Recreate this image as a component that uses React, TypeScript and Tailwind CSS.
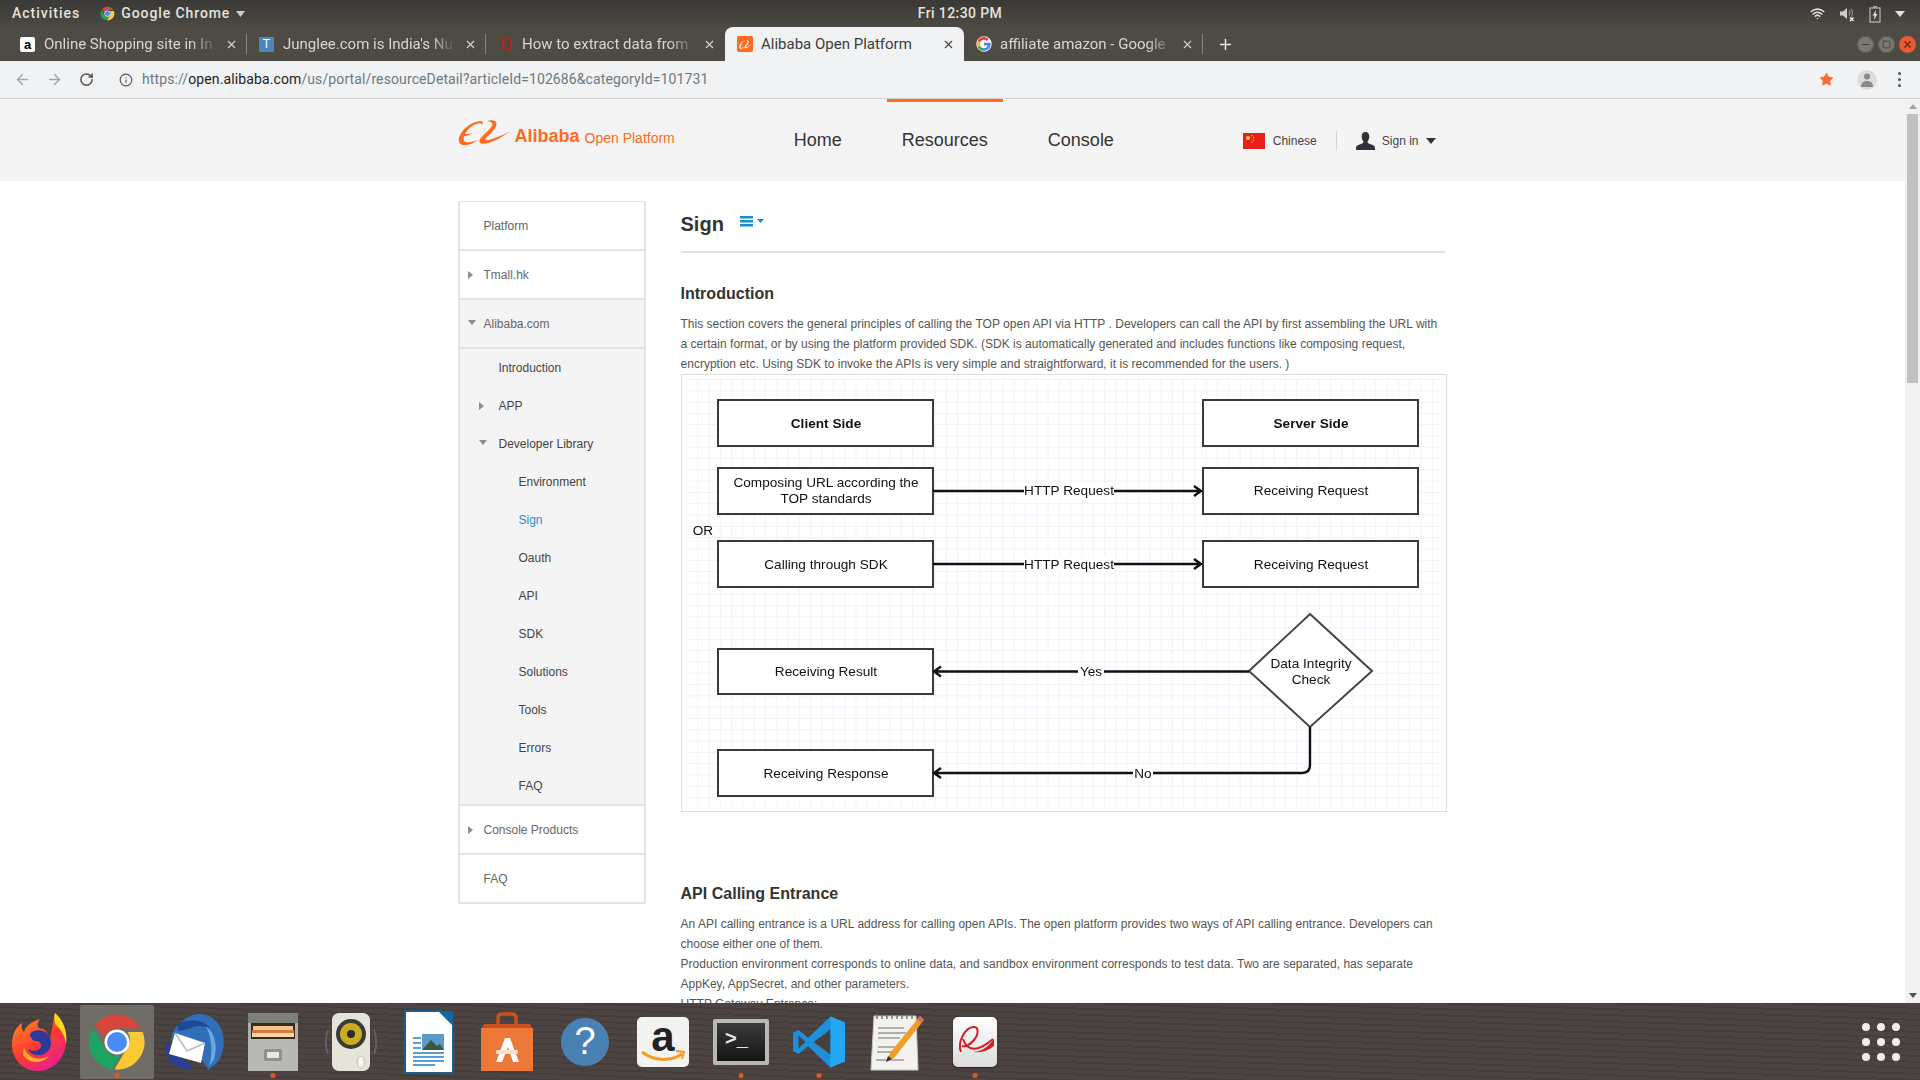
import React from 'react';
import { ArrowLeft, ArrowRight, RotateCw, Info, Plus, X, Minus, Square, Star, Wifi } from 'lucide-react';

const uiFont = "font-['Roboto','Noto_Sans',sans-serif]";
const pageFont = "font-['Liberation_Sans',Arial,sans-serif]";

const ChromeIcon = ({ size = 16 }: { size?: number }) => (
  <svg width={size} height={size} viewBox="0 0 48 48">
    <path d="M24 2a22 22 0 0 1 19.05 11H24a11 11 0 0 0-10.4 7.4L6.9 10A22 22 0 0 1 24 2z" fill="#d9453a" />
    <path d="M4.9 13l9.6 16.6A11 11 0 0 0 26.5 34.7L20 46A22 22 0 0 1 4.9 13z" fill="#1da462" />
    <path d="M44.5 16A22 22 0 0 1 22 46l9.6-16.6A11 11 0 0 0 32.5 16z" fill="#fcc934" />
    <circle cx="24" cy="24" r="10" fill="#fff" />
    <circle cx="24" cy="24" r="8" fill="#4c8bf5" />
  </svg>
);

const GoogleIcon = () => (
  <svg width="16" height="16" viewBox="0 0 48 48">
    <circle cx="24" cy="24" r="23" fill="#fff" />
    <path d="M43.6 20.5H24v7.9h11.3C34 33.5 29.600 36.500 24 36.500v8c10.800 0 20-7.800 20-20.500 0-1.200-.1-2.400-.4-3.500z" fill="#4285f4" />
    <path d="M11.700 28.300A12.800 12.800 0 0 1 11.700 19.700L5 14.500a22 22 0 0 0 0 19z" fill="#fbbc05" />
    <path d="M24 11.500c3.200 0 6 1.100 8.200 3.200l6-6A20.500 20.500 0 0 0 5 14.500l6.700 5.200C13.300 15 18.200 11.500 24 11.500z" fill="#ea4335" />
    <path d="M24 36.500c-5.800 0-10.700-3.500-12.300-8.200L5 33.500a20.500 20.500 0 0 0 19 11z" fill="#34a853" />
  </svg>
);

const AlibabaMark = ({ w = 16, h = 16, fill = '#ff6a1f' }: { w?: number; h?: number; fill?: string }) => (
  <svg width={w} height={h} viewBox="0 0 52 28" preserveAspectRatio="none">
    <path d="M24 2C15 2 5 9 1.500 18c-2 5.500 0 9 5 9 5 0 10-2.500 14-5.500-4 1.500-8.500 3-12 2.500-3-.5-3.500-3-2.500-6 2-.5 7-2 9-3.500-2.500.5-6 1.200-8 1.200C10 10 16 5 21 4.500c2-.2 3 .5 3.500 1.500.5-2-.2-4-.5-4z" fill={fill} />
    <path d="M29 2c5-1.500 9-.5 9.500 2.500.5 3.500-4 9.500-10 14.500-2 2-1.500 3.500 1 3 5-1 13-4 22.500-9-8 6-17 11-24 12.500-5 1-8.500-1-5.500-5.500 4-5 11-10 12-14 .5-2-2-3.500-5.500-4z" fill={fill} />
  </svg>
);

const Tab = ({ icon, title, active, sep }: { icon: React.ReactNode; title: string; active?: boolean; sep?: boolean }) => (
  <div className={`relative flex h-[34px] w-[239px] shrink-0 items-center pl-3 pr-[9px] ${active ? 'rounded-t-lg bg-[#f1f2f4] text-[#3c3c3c]' : 'text-[#d8d6d0]'}`}>
    <span className="flex w-6 shrink-0 items-center">{icon}</span>
    <span className={`flex-1 overflow-hidden whitespace-nowrap text-[15px] ${active ? '' : '[mask-image:linear-gradient(to_right,black_85%,transparent)]'}`}>{title}</span>
    <X size={13} strokeWidth={2} className={`ml-2 shrink-0 ${active ? 'text-[#444]' : 'text-[#d8d6d0]'}`} />
    {sep && <span className="absolute right-0 top-[7px] h-[20px] w-px bg-[#88857e]" />}
  </div>
);

const TopBar = () => (
  <div className={`relative flex h-[27px] shrink-0 items-center bg-gradient-to-b from-[#3a3935] to-[#4b4942] px-3 text-[14px] font-medium text-[#e4e2dc] ${uiFont}`}>
    <span className="tracking-[1px]">Activities</span>
    <span className="ml-5 flex items-center gap-[6px] tracking-[0.9px]">
      <ChromeIcon size={15} />
      Google Chrome
      <svg width="9" height="6" viewBox="0 0 9 6"><path d="M0 0h9L4.500 6z" fill="#cfcdc7" /></svg>
    </span>
    <span className="absolute left-1/2 -translate-x-1/2 tracking-[0.4px]">Fri 12:30 PM</span>
    <div className="ml-auto flex items-center gap-[14px] pr-[3px]">
      <Wifi size={15} strokeWidth={2.6} className="text-[#dedcd6]" />
      <svg width="16" height="16" viewBox="0 0 16 16" fill="none">
        <path d="M1 5.500h3L8 2v11L4 9.500H1z" fill="#cfcdc7" />
        <path d="M10 4.500c1 1 1 4 0 5M12 3c2 2 2 6 0 8" stroke="#8f8d87" strokeWidth="1.200" />
        <path d="M11 11.500l3.500 3.500M14.500 11.500L11 15" stroke="#eee" strokeWidth="1.600" />
      </svg>
      <svg width="12" height="18" viewBox="0 0 12 18" fill="none">
        <rect x="1" y="3" width="10" height="14" stroke="#a9a7a1" strokeWidth="1.400" />
        <rect x="4" y="1" width="4" height="2" fill="#a9a7a1" />
        <path d="M7 5L3.500 10.500h2L5 15l3.500-6h-2z" fill="#e4e2dc" />
      </svg>
      <svg width="10" height="6" viewBox="0 0 10 6"><path d="M0 0h10L5 6z" fill="#e4e2dc" /></svg>
    </div>
  </div>
);

const TabStrip = () => (
  <div className={`flex h-[34px] shrink-0 items-center bg-[#4d4b44] pl-2 ${uiFont}`}>
    <Tab
      sep
      title="Online Shopping site in In"
      icon={<span className={`flex h-[15px] w-[15px] items-center justify-center rounded-[2px] bg-white text-[13px] font-bold leading-none text-black ${pageFont}`}>a</span>}
    />
    <Tab
      sep
      title="Junglee.com is India's Nu"
      icon={<span className={`flex h-[15px] w-[15px] items-center justify-center bg-[#4a86bd] text-[12px] leading-none text-white ${pageFont}`}>T</span>}
    />
    <Tab
      title="How to extract data from"
      icon={<span className="ml-[2px] text-[18px] font-bold leading-none text-[#a8281f]">Q</span>}
    />
    <Tab
      active
      title="Alibaba Open Platform"
      icon={
        <span className="flex h-4 w-4 items-center justify-center rounded-[2px] bg-[#ff6a1f]">
          <AlibabaMark w={13} h={9} fill="#fff" />
        </span>
      }
    />
    <Tab sep title="affiliate amazon - Google" icon={<GoogleIcon />} />
    <Plus size={17} strokeWidth={2} className="ml-[14px] text-[#eeece6]" />
    <div className="ml-auto flex items-center gap-[4px] pr-[4px]">
      <span className="flex h-[17px] w-[17px] items-center justify-center rounded-full bg-[#7a7873] shadow-[inset_0_0_0_1px_#5d5b56]">
        <Minus size={11} className="text-[#3d3b37]" />
      </span>
      <span className="flex h-[17px] w-[17px] items-center justify-center rounded-full bg-[#7a7873] shadow-[inset_0_0_0_1px_#5d5b56]">
        <Square size={9} className="text-[#3d3b37]" />
      </span>
      <span className="flex h-[17px] w-[17px] items-center justify-center rounded-full bg-[#e95a30]">
        <X size={11} strokeWidth={2.4} className="text-[#5a2514]" />
      </span>
    </div>
  </div>
);

const Toolbar = () => (
  <div className={`flex h-[38px] shrink-0 items-center border-b border-[#d2d2d2] bg-[#f1f2f4] pl-[14px] ${uiFont}`}>
    <ArrowLeft size={17} strokeWidth={2} className="text-[#a4a6a9]" />
    <ArrowRight size={17} strokeWidth={2} className="ml-[15px] text-[#a4a6a9]" />
    <RotateCw size={15} strokeWidth={2.4} className="ml-[16px] text-[#555]" />
    <Info size={14} strokeWidth={2} className="ml-[25px] text-[#555]" />
    <span className="ml-[9px] text-[14px] tracking-[0.11px] text-[#6c7a7e]">
      https://<span className="text-[#1d1d1d]">open.alibaba.com</span>/us/portal/resourceDetail?articleId=102686&amp;categoryId=101731
    </span>
    <div className="ml-auto flex items-center">
      <Star size={15} fill="#fb6a3a" strokeWidth={1} className="text-[#fb6a3a]" />
      <span className="ml-[23px] flex h-[20px] w-[20px] items-center justify-center rounded-full bg-[#dcdcdc]">
        <svg width="12" height="14" viewBox="0 0 12 14"><circle cx="6" cy="3.500" r="3" fill="#8a8a8a" /><path d="M0 14c0-4 2-6 6-6s6 2 6 6z" fill="#8a8a8a" /></svg>
      </span>
      <span className="ml-[21px] mr-[19px] flex flex-col gap-[3px]">
        <span className="h-[3px] w-[3px] rounded-full bg-[#555]" />
        <span className="h-[3px] w-[3px] rounded-full bg-[#555]" />
        <span className="h-[3px] w-[3px] rounded-full bg-[#555]" />
      </span>
    </div>
  </div>
);

const SiteHeader = () => (
  <div className="h-[82px] shrink-0 bg-[#f4f4f4]">
    <div className="mx-auto flex h-full w-[990px] items-start">
      <div className="mt-[20px] flex h-[28px] items-start">
        <AlibabaMark w={52} h={27} />
        <span className="ml-[5px] mt-[3px] text-[18px] font-bold leading-[28px] text-[#ff6a1f]">Alibaba</span>
        <span className="ml-[5px] mt-[5px] text-[14px] leading-[28px] text-[#ff6a1f]">Open Platform</span>
      </div>
      <nav className="ml-[104px] flex text-[18px] text-[#333]">
        <span className="px-[15px] pt-[28px]">Home</span>
        <span className="ml-[30px] border-t-[3px] border-[#ff6a1f] px-[15px] pt-[25px]">Resources</span>
        <span className="ml-[30px] px-[15px] pt-[28px]">Console</span>
      </nav>
      <div className="ml-auto mt-[32px] flex items-center pr-[12px] text-[12px] text-[#444]">
        <svg width="22" height="16" viewBox="0 0 22 16">
          <rect width="22" height="16" fill="#e5211a" />
          <circle cx="5" cy="5" r="2" fill="#ffd21f" />
          <circle cx="9" cy="2.500" r=".7" fill="#ffd21f" />
          <circle cx="10.500" cy="4.500" r=".7" fill="#ffd21f" />
          <circle cx="10.500" cy="7" r=".7" fill="#ffd21f" />
          <circle cx="9" cy="9" r=".7" fill="#ffd21f" />
        </svg>
        <span className="ml-[8px]">Chinese</span>
        <span className="mx-[19px] h-[20px] w-px bg-[#d2d2d2]" />
        <svg width="19" height="18" viewBox="0 0 19 18">
          <path d="M9.500 0c2.600 0 3.800 2 3.800 4.500 0 2-.8 3.800-1.800 5 0 1.300.7 1.700 2.500 2.500 3 1 5 1.800 5 4V18H0v-2c0-2.200 2-3 5-4 1.800-.8 2.500-1.200 2.500-2.500-1-1.200-1.800-3-1.800-5C5.700 2 6.900 0 9.500 0z" fill="#2f3338" />
        </svg>
        <span className="ml-[7px]">Sign in</span>
        <svg className="ml-[7px]" width="10" height="6" viewBox="0 0 10 6"><path d="M0 0h10L5 6z" fill="#333" /></svg>
      </div>
    </div>
  </div>
);

const Caret = ({ open }: { open?: boolean }) =>
  open ? (
    <svg className="absolute -mt-[3px]" width="8" height="5" viewBox="0 0 8 5"><path d="M0 0h8L4 5z" fill="#8c8c8c" /></svg>
  ) : (
    <svg className="absolute" width="5" height="8" viewBox="0 0 5 8"><path d="M0 0l5 4-5 4z" fill="#8c8c8c" /></svg>
  );

const TopRow = ({ label, caret, open }: { label: string; caret?: boolean; open?: boolean }) => (
  <div className={`relative flex h-[49px] items-center border-b-2 border-[#e3e3e3] pl-[24px] ${open ? 'bg-[#f4f4f4]' : ''}`}>
    {caret && <span className="absolute left-[8px] flex h-full items-center"><Caret open={open} /></span>}
    {label}
  </div>
);

const SubRow = ({ label, indent, caret, open, active }: { label: string; indent: string; caret?: boolean; open?: boolean; active?: boolean }) => (
  <div className={`relative flex h-[38px] items-center ${indent} ${active ? 'text-[#1b8fdc]' : 'text-[#444]'}`}>
    {caret && <span className="absolute left-[19px] flex h-full items-center"><Caret open={open} /></span>}
    {label}
  </div>
);

const Sidebar = () => (
  <aside className="w-[188px] shrink-0 self-start border-x-2 border-t border-[#e3e3e3] text-[12px] text-[#666]">
    <TopRow label="Platform" />
    <TopRow label="Tmall.hk" caret />
    <TopRow label="Alibaba.com" caret open />
    <div className="h-[457px] border-b-2 border-[#e3e3e3] bg-[#f4f4f4]">
      <SubRow label="Introduction" indent="pl-[39px]" />
      <SubRow label="APP" indent="pl-[39px]" caret />
      <SubRow label="Developer Library" indent="pl-[39px]" caret open />
      {['Environment', 'Sign', 'Oauth', 'API', 'SDK', 'Solutions', 'Tools', 'Errors', 'FAQ'].map((s) => (
        <SubRow key={s} label={s} indent="pl-[59px]" active={s === 'Sign'} />
      ))}
    </div>
    <TopRow label="Console Products" caret />
    <TopRow label="FAQ" />
  </aside>
);

const Box = ({ x, y, w, h }: { x: number; y: number; w: number; h: number }) => (
  <rect x={x} y={y} width={w} height={h} fill="#fff" stroke="#3a3a3a" strokeWidth="2" />
);

const Flow = () => (
  <svg className="block blur-[0.4px]" width="764" height="436" viewBox="682 375 764 436" fontFamily="Liberation Sans, Arial, sans-serif" fontSize="13.6" fill="#111">
    <defs>
      <pattern id="minor" x="686" y="379" width="11.300" height="11.300" patternUnits="userSpaceOnUse">
        <path d="M0 0V11.300M0 0H11.300" stroke="#f2f1fd" strokeWidth="1.800" fill="none" />
      </pattern>
    </defs>
    <rect x="686" y="379" width="755" height="428" fill="url(#minor)" />
    <Box x={718} y={400} w={215} h={46} />
    <Box x={1203} y={400} w={215} h={46} />
    <Box x={718} y={468} w={215} h={46} />
    <Box x={1203} y={468} w={215} h={46} />
    <Box x={718} y={541} w={215} h={46} />
    <Box x={1203} y={541} w={215} h={46} />
    <Box x={718} y={649} w={215} h={45} />
    <Box x={718} y={750} w={215} h={46} />
    <path d="M1310 614L1372 671L1310 727L1249 671Z" fill="#fff" stroke="#444" strokeWidth="2" />
    <g stroke="#111" strokeWidth="2.400" fill="none">
      <path d="M933 491H1200M1194 486L1201 491L1194 496" />
      <path d="M933 564H1200M1194 559L1201 564L1194 569" />
      <path d="M1249 671.500H935M941 666.500L934 671.500L941 676.500" />
      <path d="M1310 727V765Q1310 773 1302 773H935M941 768L934 773L941 778" />
    </g>
    <g textAnchor="middle">
      <text x="826" y="428" fontWeight="bold">Client Side</text>
      <text x="1311" y="428" fontWeight="bold">Server Side</text>
      <text x="826" y="487">Composing URL according the</text>
      <text x="826" y="503">TOP standards</text>
      <text x="826" y="569">Calling through SDK</text>
      <text x="1311" y="495">Receiving Request</text>
      <text x="1311" y="569">Receiving Request</text>
      <text x="826" y="676">Receiving Result</text>
      <text x="826" y="778">Receiving Response</text>
      <text x="1311" y="668">Data Integrity</text>
      <text x="1311" y="684">Check</text>
      <text x="703" y="535">OR</text>
      <rect x="1024" y="483" width="90" height="16" fill="#fff" stroke="none" />
      <text x="1069" y="495">HTTP Request</text>
      <rect x="1024" y="556" width="90" height="16" fill="#fff" stroke="none" />
      <text x="1069" y="569">HTTP Request</text>
      <rect x="1078" y="663" width="26" height="16" fill="#fff" stroke="none" />
      <text x="1091" y="676">Yes</text>
      <rect x="1133" y="765" width="20" height="16" fill="#fff" stroke="none" />
      <text x="1143" y="778">No</text>
    </g>
  </svg>
);

const Article = () => (
  <main className="w-[766px] shrink-0 text-[12px] leading-[20px] tracking-[0.017px] text-[#555]">
    <div className="mr-[2px] flex h-[52px] items-start border-b-2 border-[#e3e3e3] pt-[9px]">
      <h1 className="text-[20px] font-bold leading-[28px] text-[#333]">Sign</h1>
      <svg className="ml-[16px] mt-[6px]" width="24" height="11" viewBox="0 0 24 11">
        <path d="M0 0h13v2.500H0zM0 4h13v2.500H0zM0 8h13v2.500H0z" fill="#1b8fc9" />
        <path d="M17 3h7l-3.500 4z" fill="#1b8fc9" />
      </svg>
    </div>
    <h2 className="mt-[30px] text-[16px] font-bold leading-[22px] text-[#333]">Introduction</h2>
    <p className="mt-[9px]">
      This section covers the general principles of calling the TOP open API via HTTP . Developers can call the API by first assembling the URL with<br />
      a certain format, or by using the platform provided SDK. (SDK is automatically generated and includes functions like composing request,<br />
      encryption etc. Using SDK to invoke the APIs is very simple and straightforward, it is recommended for the users. )
    </p>
    <div className="border border-[#ddd]">
      <Flow />
    </div>
    <h2 className="mt-[71px] text-[16px] font-bold leading-[22px] text-[#333]">API Calling Entrance</h2>
    <p className="mt-[9px]">
      An API calling entrance is a URL address for calling open APIs. The open platform provides two ways of API calling entrance. Developers can<br />
      choose either one of them.<br />
      Production environment corresponds to online data, and sandbox environment corresponds to test data. Two are separated, has separate<br />
      AppKey, AppSecret, and other parameters.<br />
      HTTP Gateway Entrance:
    </p>
  </main>
);

const Firefox = () => (
  <svg width="58" height="62" viewBox="0 0 58 62">
    <defs>
      <linearGradient id="ff" x1="0" y1="0" x2="0.6" y2="1">
        <stop offset="0" stopColor="#ff9a1f" />
        <stop offset="0.6" stopColor="#ff3b30" />
        <stop offset="1" stopColor="#e8208a" />
      </linearGradient>
    </defs>
    <path d="M45 2c6 7 12 16 11 29-1 17-13 29-28 29C12 60 1 47 2 31 3 22 6 16 12 12c-1 4 0 7 2 9 2-7 9-11 16-13-3 4-3 7-1 9 6 1 10 5 11 11 2-8 3-17 5-26z" fill="url(#ff)" />
    <path d="M45 2c7 6 13 17 11 31-1-8-5-15-10-19-2-4-2-8-1-12z" fill="#ffd91a" />
    <path d="M24 20c9-3 17 3 17 12 0 8-7 13-14 12-4 0-8-3-9-6 5 3 11 2 13-2 1-3-1-6-5-6-3 0-4-1-4-3-3-1-3-5 2-7z" fill="#2b3a9c" />
    <path d="M14 36c3 11 15 15 25 9-6 8-20 8-26-1z" fill="#ffb21f" />
  </svg>
);

const Thunderbird = () => (
  <svg width="62" height="60" viewBox="0 0 62 60">
    <path d="M18 10C28-1 44 0 53 10c9 11 9 29 0 41l-9 7c-2-6-8-12-14-16L8 32C6 22 10 16 18 10z" fill="#2f6fb8" />
    <path d="M14 12C26 6 40 8 46 16c-6-2-12-3-17-1-5 2-10 4-15 4z" fill="#1c4a96" />
    <path d="M2 30c-2 10 3 22 14 26 5 2 10 1 13-1L8 36z" fill="#2a3f94" />
    <path d="M42 14c9 7 12 20 8 34l-5 6c4-12 3-28-3-40z" fill="#6aa6e0" />
    <path d="M11 21l30 10-4 20L5 42z" fill="#fff" />
    <path d="M11 21l12 18 18-8" stroke="#b9bcc4" strokeWidth="1.500" fill="none" />
  </svg>
);

const FileCabinet = () => (
  <svg width="54" height="62" viewBox="0 0 54 62">
    <rect x="2" y="2" width="50" height="58" rx="2" fill="#aeb0ac" />
    <rect x="2" y="2" width="50" height="10" fill="#7e807c" />
    <rect x="5" y="12" width="44" height="16" fill="#3a2a20" />
    <rect x="7" y="15" width="40" height="4" fill="#f0c48a" />
    <rect x="6" y="19" width="42" height="3" fill="#d9773a" />
    <rect x="6" y="22" width="42" height="4" fill="#f2d9b0" />
    <rect x="2" y="28" width="50" height="32" fill="#b8bab6" />
    <rect x="18" y="38" width="18" height="12" rx="2" fill="#8f918d" />
    <rect x="21" y="41" width="12" height="6" rx="1" fill="#e8e8e6" />
  </svg>
);

const Speaker = () => (
  <svg width="60" height="60" viewBox="0 0 60 60">
    <path d="M7 18c-3 7-3 17 0 24M53 18c3 7 3 17 0 24" stroke="#6d7480" strokeWidth="2" fill="none" opacity="0.6" />
    <rect x="11" y="1" width="38" height="58" rx="7" fill="#e6e3d8" />
    <circle cx="30" cy="22" r="15" fill="#3a3a38" />
    <circle cx="30" cy="22" r="11" fill="#c9ac24" />
    <circle cx="30" cy="22" r="4" fill="#2b2b29" />
    <ellipse cx="40" cy="50" rx="3.500" ry="6" fill="#f7f6f0" stroke="#c4c2b8" />
  </svg>
);

const Writer = () => (
  <svg width="50" height="64" viewBox="0 0 50 64">
    <path d="M1 1h36l12 12v50H1z" fill="#fff" stroke="#1a5f8f" strokeWidth="2" />
    <path d="M34 1h15v15z" fill="#14689e" />
    <rect x="9" y="27" width="8" height="2" fill="#5aa0d8" />
    <rect x="9" y="32" width="8" height="2" fill="#5aa0d8" />
    <rect x="9" y="37" width="8" height="2" fill="#5aa0d8" />
    <rect x="18" y="24" width="22" height="16" fill="#5b9bc9" />
    <path d="M18 40l9-10 6 6 3-2 4 6z" fill="#3c5a3c" />
    <rect x="9" y="42" width="31" height="2" fill="#5aa0d8" />
    <rect x="9" y="46" width="31" height="2" fill="#5aa0d8" />
    <rect x="9" y="50" width="31" height="2" fill="#5aa0d8" />
    <rect x="9" y="54" width="22" height="2" fill="#5aa0d8" />
  </svg>
);

const Store = () => (
  <svg width="54" height="60" viewBox="0 0 54 60">
    <path d="M18 12V6q0-4 4-4h10q4 0 4 4v6" stroke="#c9501f" strokeWidth="3.500" fill="none" />
    <path d="M4 12h46l3 6H1z" fill="#c9501f" />
    <rect x="1" y="16" width="52" height="43" fill="#ee7838" />
    <path d="M16 50l9-24h5l9 24h-6l-5-15-6 15z" fill="#fff" />
    <rect x="16" y="38" width="22" height="4" rx="1" fill="#fbe0d0" />
  </svg>
);

const DockLetter = ({ children, cls }: { children: React.ReactNode; cls: string }) => (
  <span className={`flex items-center justify-center ${pageFont} ${cls}`}>{children}</span>
);

const Amazon = () => (
  <span className="relative flex h-[50px] w-[52px] flex-col items-center rounded-[5px] bg-[#f2f2f0]">
    <span className={`text-[42px] font-bold leading-[40px] text-[#222] ${pageFont}`}>a</span>
    <svg className="absolute bottom-[5px]" width="44" height="12" viewBox="0 0 44 12" fill="none">
      <path d="M1 2c12 9 28 10 40 2" stroke="#f79c1d" strokeWidth="3" />
      <path d="M35 1l8 1-2 7" stroke="#f79c1d" strokeWidth="2" />
    </svg>
  </span>
);

const Terminal = () => (
  <span className="flex h-[46px] w-[56px] flex-col rounded-[2px] border-[4px] border-[#b8b8b4] bg-gradient-to-b from-[#3c3c3c] to-[#151515] px-2 py-[5px]">
    <span className={`flex items-start text-[20px] font-bold leading-none text-[#e6e6e6] ${pageFont}`}>
      &gt;_
    </span>
  </span>
);

const VSCode = () => (
  <svg width="54" height="54" viewBox="0 0 100 100">
    <path d="M71 3L30 42 12 28 2 33v34l10 5 18-14 41 39 27-11V14z" fill="#1f8fdc" />
    <path d="M71 3l27 11v72L71 97z" fill="#24a7f2" />
    <path d="M71 27L40 50l31 23z" fill="#4a4040" />
    <path d="M12 38l13 12-13 12z" fill="#4a4040" />
  </svg>
);

const Gedit = () => (
  <svg width="56" height="60" viewBox="0 0 56 60">
    <path d="M5 4h42l2 54H2z" fill="#f3f2ee" stroke="#c9c8c2" />
    <path d="M8 2v5M13 2v5M18 2v5M23 2v5M28 2v5M33 2v5M38 2v5M43 2v5" stroke="#666" strokeWidth="1.300" />
    <path d="M9 16h26M9 21h28M9 26h22M9 35h20M8 40h18M7 48h28" stroke="#9a9a96" strokeWidth="1.400" />
    <path d="M51 4l4 4-30 38-8 4 4-9z" fill="#f29d26" />
    <path d="M51 4l4 4-3 3-4-4z" fill="#d86a6a" />
    <path d="M17 50l2-6 4 3z" fill="#333" />
  </svg>
);

const Evince = () => (
  <span className="flex h-[50px] w-[44px] items-center justify-center rounded-[5px] bg-gradient-to-b from-white to-[#dcdcdc] shadow-[0_1px_2px_#222]">
    <svg width="40" height="40" viewBox="0 0 40 40" fill="none">
      <path d="M6 30C2 20 10 6 18 5c6-1 6 7 1 13-4 5-9 7-12 6M8 17c4 12 14 14 30 0" stroke="#d01f25" strokeWidth="2" />
      <path d="M18 30c8 0 15-5 21-13v7c-6 5-13 7-21 6z" fill="#d01f25" />
    </svg>
  </span>
);

const DockItem = ({ children, dot, active }: { children: React.ReactNode; dot?: boolean; active?: boolean }) => (
  <div className={`relative flex h-[74px] w-[74px] shrink-0 items-center justify-center rounded-[2px] ${active ? 'bg-[#706d67]' : ''}`}>
    {children}
    {dot && <span className="absolute bottom-[1px] left-1/2 h-[5px] w-[5px] -translate-x-1/2 rounded-full bg-[#e95420]" />}
  </div>
);

const Dock = () => (
  <div className="flex h-[77px] shrink-0 items-center gap-[4px] bg-[#4a413f] bg-[repeating-linear-gradient(2deg,rgba(0,0,0,0.06)_0px,rgba(0,0,0,0.06)_2px,rgba(255,255,255,0.015)_2px,rgba(255,255,255,0.015)_6px)] pl-[2px]">
    <DockItem><Firefox /></DockItem>
    <DockItem active dot><ChromeIcon size={60} /></DockItem>
    <DockItem><Thunderbird /></DockItem>
    <DockItem dot><FileCabinet /></DockItem>
    <DockItem><Speaker /></DockItem>
    <DockItem><Writer /></DockItem>
    <DockItem><Store /></DockItem>
    <DockItem>
      <DockLetter cls="h-[48px] w-[48px] rounded-full bg-[#4a81b5] text-[38px] text-white">?</DockLetter>
    </DockItem>
    <DockItem><Amazon /></DockItem>
    <DockItem dot><Terminal /></DockItem>
    <DockItem dot><VSCode /></DockItem>
    <DockItem><Gedit /></DockItem>
    <DockItem dot><Evince /></DockItem>
    <div className="ml-auto mr-[20px] grid grid-cols-3 gap-[7px]">
      {Array.from({ length: 9 }).map((_, i) => (
        <span key={i} className="h-[8px] w-[8px] rounded-full bg-[#eeeeee]" />
      ))}
    </div>
  </div>
);

const Scrollbar = () => (
  <div className="flex w-[15px] shrink-0 flex-col items-center bg-[#f1f1f1]">
    <svg className="mt-[5px]" width="8" height="5" viewBox="0 0 8 5"><path d="M4 0l4 5H0z" fill="#a3a3a3" /></svg>
    <div className="mt-[5px] h-[269px] w-[11px] bg-[#c1c1c1]" />
    <svg className="mb-[5px] mt-auto" width="8" height="5" viewBox="0 0 8 5"><path d="M0 0h8L4 5z" fill="#505050" /></svg>
  </div>
);

const App = () => {
  return (
    <div className={`flex h-screen w-full flex-col overflow-hidden bg-white ${pageFont}`}>
      <TopBar />
      <TabStrip />
      <Toolbar />
      <div className="flex min-h-0 flex-1">
        <div className="min-w-0 flex-1 overflow-hidden">
          <SiteHeader />
          <div className="mx-auto flex w-[990px] gap-[35px] pt-[20px]">
            <Sidebar />
            <Article />
          </div>
        </div>
        <Scrollbar />
      </div>
      <Dock />
    </div>
  );
};

export default App;
